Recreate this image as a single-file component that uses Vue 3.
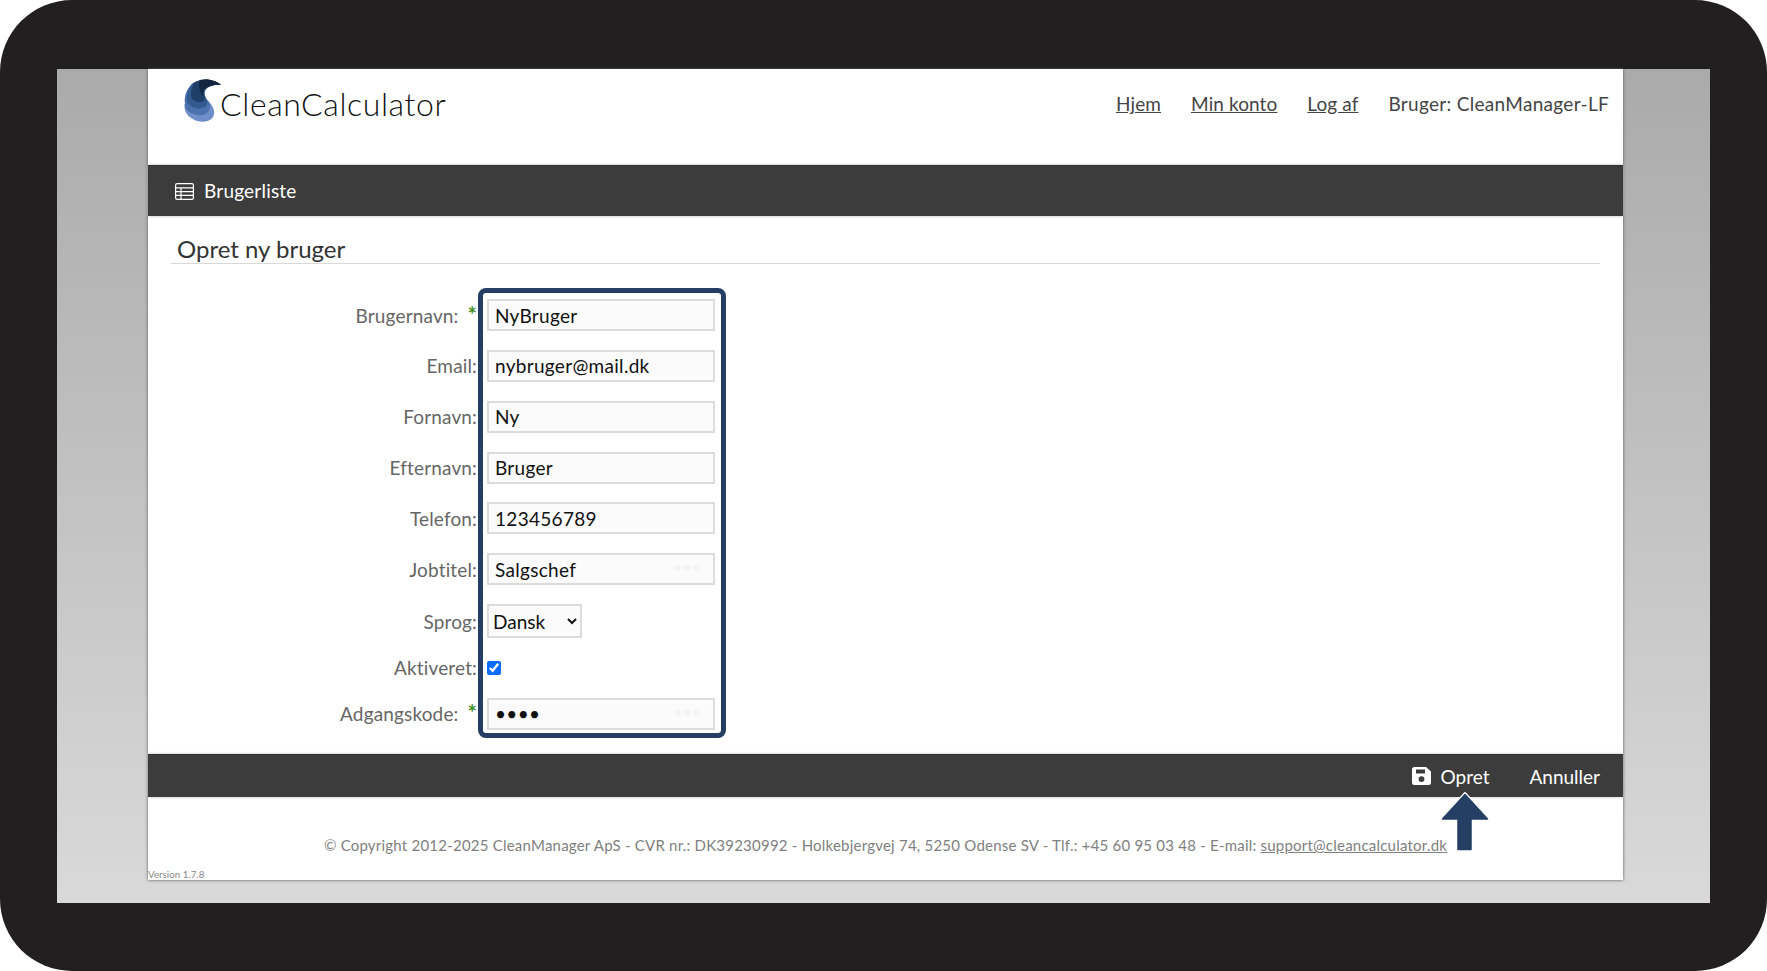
<script setup>
const fields = [
  { label: 'Brugernavn:', value: 'NyBruger', required: true },
  { label: 'Email:', value: 'nybruger@mail.dk' },
  { label: 'Fornavn:', value: 'Ny' },
  { label: 'Efternavn:', value: 'Bruger' },
  { label: 'Telefon:', value: '123456789' },
  { label: 'Jobtitel:', value: 'Salgschef', dots: true }
]
</script>

<template>
  <div class="screen">
    <div class="stage">
      <div class="card">
        <header class="top">
          <div class="brand">
            <svg class="logo" width="38" height="43" viewBox="0 0 38 43">
              <path fill="#6f8fca" d="M9 5C4 10 1 17 2 24C0 30 4 38 10 40C15 44 26 44 30 38C33 33 30 27 26 23C22 19 20 14 23 10C26 7 32 5 38 6C33 1 17 -2 9 5Z"/>
              <path fill="#4c72ad" d="M9 5C4 10 1 17 2 24C1 29 5 34 11 35C17 38 24 36 26 31C28 28 27 25 26 23C22 19 20 14 23 10C26 7 32 5 38 6C33 1 17 -2 9 5Z"/>
              <path fill="#33598f" d="M9 5C5 10 3 17 4 23C7 28 13 30 18 29C23 29 25 26 24 21C21 18 20 14 23 10C26 7 32 5 38 6C33 1 17 -2 9 5Z"/>
              <path fill="#1f3f69" d="M11 4C8 9 7 15 9 20C12 23 17 24 21 22C22 20 22 18 21 15C20 12 21 10 23 9C26 7 32 5 38 6C33 1 19 -2 11 4Z"/>
              <path fill="#14263f" d="M17 1C15 6 16 12 20 17C20 13 21 10 23 9C26 7 32 5 38 6C34 2 25 -1 17 1Z"/>
            </svg>
            <span class="brand-name">CleanCalculator</span>
          </div>
          <nav class="nav">
            <a>Hjem</a>
            <a>Min konto</a>
            <a>Log af</a>
            <span class="who">Bruger: CleanManager-LF</span>
          </nav>
        </header>

        <div class="bar bar-top">
          <svg class="table-icon" width="19" height="17" viewBox="0 0 19 17" fill="none" stroke="#fff" stroke-width="1.2">
            <rect x="0.6" y="0.6" width="17.8" height="15.8" rx="1.6"/>
            <path d="M0.6 4.8H18.4M0.6 8.6H18.4M0.6 12.4H18.4M6 4.8V16.4"/>
          </svg>
          <span class="bar-label">Brugerliste</span>
        </div>

        <main class="main">
          <h2 class="title">Opret ny bruger</h2>
          <form class="form" @submit.prevent>
            <div v-for="f in fields" :key="f.label" class="row">
              <label class="label">{{ f.label }}<span v-if="f.required" class="star">*</span></label>
              <div class="control">
                <input class="input" type="text" :value="f.value" />
                <span v-if="f.dots" class="dots">•••</span>
              </div>
            </div>
            <div class="row row-select">
              <label class="label">Sprog:</label>
              <select class="select"><option>Dansk</option></select>
            </div>
            <div class="row row-check">
              <label class="label">Aktiveret:</label>
              <input class="check" type="checkbox" checked />
            </div>
            <div class="row">
              <label class="label">Adgangskode:<span class="star">*</span></label>
              <div class="control">
                <input class="input" type="password" value="Test" />
                <span class="dots">•••</span>
              </div>
            </div>
            <div class="highlight"></div>
          </form>
        </main>

        <div class="bar bar-bottom">
          <svg class="save-icon" width="19" height="18" viewBox="0 0 19 18">
            <path fill="#fff" fill-rule="evenodd" d="M2.5 0H14L19 4.6V15.5A2.5 2.5 0 0 1 16.5 18H2.5A2.5 2.5 0 0 1 0 15.5V2.5A2.5 2.5 0 0 1 2.5 0ZM4 2.6V6.4H13V2.6ZM9.5 9.2A2.9 2.9 0 1 0 9.5 15A2.9 2.9 0 1 0 9.5 9.2Z"/>
          </svg>
          <span class="opret">Opret</span>
          <span>Annuller</span>
        </div>

        <footer class="foot">
          © Copyright 2012-2025 CleanManager ApS - CVR nr.: DK39230992 - Holkebjergvej 74, 5250 Odense SV - Tlf.: +45 60 95 03 48 - E-mail: <a>support@cleancalculator.dk</a>
          <span class="version">Version 1.7.8</span>
        </footer>

        <svg class="arrow" width="54" height="64" viewBox="0 0 54 64">
          <path d="M27 3L3 29.500H20V58H33V29.500H51Z" fill="#243f63" stroke="#fff" stroke-width="2" stroke-linejoin="round"/>
          <path d="M27 4.500L4.500 29H20V59.500H33V29H49.500Z" fill="#243f63" stroke="#243f63" stroke-width="1.500" stroke-linejoin="round"/>
        </svg>
      </div>
    </div>
  </div>
</template>

<style>
html, body { margin: 0; background: #fff; overflow: hidden; }
</style>

<style scoped>
.screen {
  box-sizing: border-box;
  width: 1767px;
  height: 971px;
  padding: 69px 57px 68px;
  background: #221f20;
  border-radius: 72px;
  font-family: Lato, "Open Sans", sans-serif;
  font-size: 19px;
}
.stage {
  height: 834px;
  padding-left: 91px;
  background: linear-gradient(#aaaaaa, #d9d9d9);
}
.card {
  position: relative;
  display: flex;
  flex-direction: column;
  width: 1475px;
  height: 811px;
  background: #fff;
  box-shadow: 0 0 3px #555;
}
.top {
  display: flex;
  justify-content: space-between;
  box-sizing: border-box;
  height: 96px;
  padding: 10px 14px 0 35px;
}
.brand { display: flex; align-items: flex-start; }
.brand-name {
  margin-top: 5px;
  margin-left: -1px;
  font-size: 32px;
  font-weight: 300;
  letter-spacing: 0.6px;
  line-height: 40px;
  color: #111;
}
.nav {
  display: flex;
  gap: 30px;
  margin-top: 13px;
  line-height: 24px;
  color: #444;
  white-space: nowrap;
}
.nav a { text-decoration: underline; letter-spacing: 0.1px; }
.who { letter-spacing: 0.3px; }
.bar {
  display: flex;
  align-items: center;
  background: #3c3c3c;
  color: #fff;
  box-shadow: 0 0 3px #bbb;
  border-top: 1px solid #333;
  box-sizing: border-box;
}
.bar-top { height: 51px; padding: 0 0 2px 27px; }
.bar-label { letter-spacing: 0.2px; }
.table-icon { margin: 2px 10px 0 0; }
.main { flex: 1; }
.title {
  box-sizing: border-box;
  height: 48px;
  margin: 0 23px;
  padding: 19px 0 0 6px;
  border-bottom: 1px solid #d8d8d8;
  font-size: 24px;
  font-weight: 400;
  line-height: 27px;
  color: #333;
}
.form {
  position: relative;
  display: flex;
  flex-direction: column;
  gap: 18.85px;
  margin-top: 35px;
}
.row { display: flex; align-items: center; gap: 10px; height: 32px; }
.row-select { height: 34px; }
.row-check { height: 22px; }
.label {
  width: 329px;
  text-align: right;
  color: #666;
  letter-spacing: 0.15px;
  white-space: nowrap;
}
.star {
  margin-left: 9px;
  color: #3f8f1f;
  font-size: 22px;
  font-weight: 700;
  line-height: 0;
}
.control { position: relative; }
.input {
  display: block;
  box-sizing: border-box;
  width: 228px;
  height: 32px;
  padding: 0 6px;
  border: 2px solid #dcdcdc;
  background: #fbfbfb;
  color: #111;
  font: inherit;
  letter-spacing: 0.3px;
  outline: none;
}
.dots {
  position: absolute;
  top: 4px;
  right: 14px;
  color: #f3f3f3;
  font-size: 16px;
}
.select {
  box-sizing: border-box;
  width: 95px;
  height: 34px;
  border: 2px solid #dcdcdc;
  background: #fbfbfb;
  color: #111;
  font: inherit;
}
.check {
  width: 14px;
  height: 14px;
  margin: 0;
  accent-color: #0a6cff;
}
.highlight {
  position: absolute;
  left: 330px;
  top: -11px;
  box-sizing: border-box;
  width: 248px;
  height: 450px;
  border: 5px solid #243f63;
  border-radius: 8px;
  pointer-events: none;
}
.bar-bottom {
  flex: none;
  justify-content: flex-end;
  height: 43px;
  padding-right: 23px;
}
.save-icon { margin-right: 9px; }
.opret { margin-right: 40px; }
.foot {
  position: relative;
  flex: none;
  box-sizing: border-box;
  height: 83px;
  padding-top: 38px;
  text-align: center;
  font-size: 15px;
  letter-spacing: 0.22px;
  line-height: 20px;
  color: #808080;
  white-space: nowrap;
}
.foot a { text-decoration: underline; }
.version {
  position: absolute;
  left: 0;
  bottom: 0;
  font-size: 9.8px;
  letter-spacing: 0;
  line-height: 12px;
  color: #888;
}
.arrow {
  position: absolute;
  left: 1290px;
  top: 721px;
  pointer-events: none;
}
</style>
